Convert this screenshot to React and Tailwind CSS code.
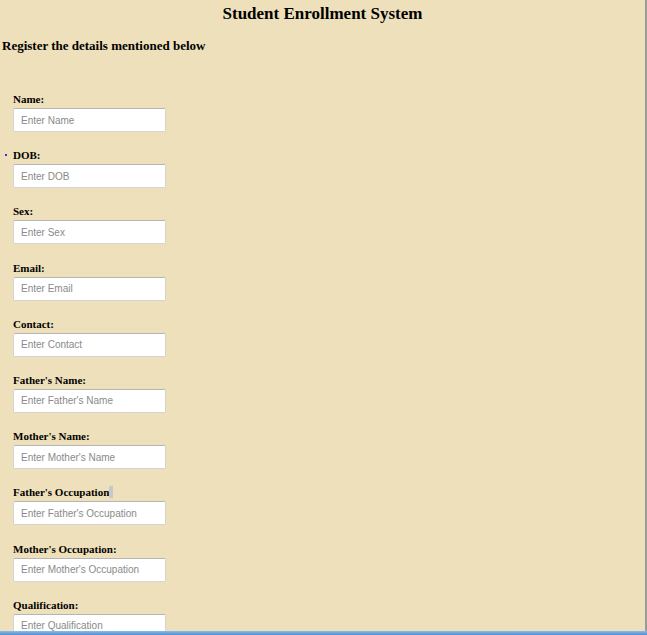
import React from 'react';

const fields = [
    { label: "Name:", ph: "Enter Name" },
    { label: "DOB:", ph: "Enter DOB", dot: true },
    { label: "Sex:", ph: "Enter Sex" },
    { label: "Email:", ph: "Enter Email" },
    { label: "Contact:", ph: "Enter Contact" },
    { label: "Father's Name:", ph: "Enter Father's Name" },
    { label: "Mother's Name:", ph: "Enter Mother's Name" },
    { label: "Father's Occupation", ph: "Enter Father's Occupation", mark: true },
    { label: "Mother's Occupation:", ph: "Enter Mother's Occupation" },
    { label: "Qualification:", ph: "Enter Qualification" },
];

const App = () => {
    return (
        <div className="relative h-[635px] overflow-hidden bg-[#eee0ba] border-r-2 border-[#9a9a9a] font-['Liberation_Serif',serif] text-black">
            <h1 className="text-center text-[17px] font-bold pt-[4px] leading-[20px]">Student Enrollment System</h1>
            <h2 className="mt-[14px] ml-[2px] text-[13px] font-bold leading-[16px]">Register the details mentioned below</h2>

            <form className="mt-[37px] pl-[13px] flex flex-col gap-[15.2px]">
                {fields.map((f) => (
                    <div key={f.label} className="flex flex-col">
                        <label className="relative text-[11px] font-bold leading-[16px] h-[16px] mb-[1px]">
                            {f.dot && <span className="absolute -left-[8px] top-[7px] w-[2px] h-[2px] bg-[#2b3bd6]" />}
                            {f.label}
                            {f.mark && <span className="bg-[#c8c8c8] text-[#c8c8c8]">:</span>}
                        </label>
                        <input
                            type="text"
                            placeholder={f.ph}
                            className="w-[153px] h-[24px] bg-white border border-[#d4d4d4] border-t-[#b5b5b5] rounded-[2px] px-[7px] text-[10px] font-['Liberation_Sans',sans-serif] placeholder:text-[#8a8a8a] outline-none"
                        />
                    </div>
                ))}
            </form>

            <div className="fixed bottom-0 left-0 right-0 h-[4px] bg-gradient-to-b from-[#8cbbe8] to-[#4e8ed6]" />
        </div>
    );
};

export default App;
